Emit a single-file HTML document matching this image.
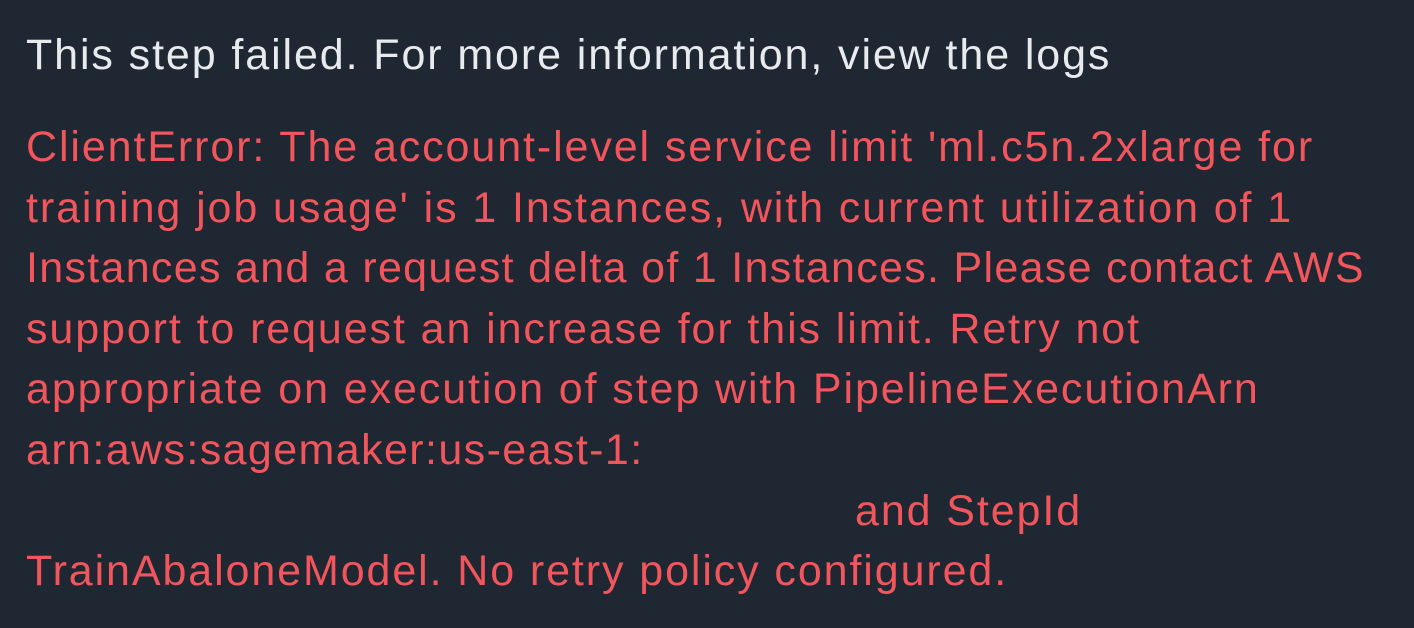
<!DOCTYPE html>
<html><head><style>
html,body{margin:0;padding:0;}
body{width:1414px;height:628px;background:#1f2732;overflow:hidden;position:relative;font-family:"Liberation Sans",sans-serif;font-size:43px;letter-spacing:1.9px;}
.l{position:absolute;left:26px;white-space:nowrap;line-height:60px;}
.w{color:#e8ebee;}
.r{color:#f2555c;}
</style></head><body>
<div class="l w" style="top:25px">This step failed. For more information, view the logs</div>
<div class="l r" style="top:117px">ClientError: The account-level service limit 'ml.c5n.2xlarge for</div>
<div class="l r" style="top:178px">training job usage' is 1 Instances, with current utilization of 1</div>
<div class="l r" style="top:238px;letter-spacing:1.3px">Instances and a request delta of 1 Instances. Please contact AWS</div>
<div class="l r" style="top:299px">support to request an increase for this limit. Retry not</div>
<div class="l r" style="top:359px">appropriate on execution of step with PipelineExecutionArn</div>
<div class="l r" style="top:420px;letter-spacing:1.4px">arn:aws:sagemaker:us-east-1:</div>
<div class="l r" style="top:481px;left:855px">and StepId</div>
<div class="l r" style="top:541px">TrainAbaloneModel. No retry policy configured.</div>
</body></html>
